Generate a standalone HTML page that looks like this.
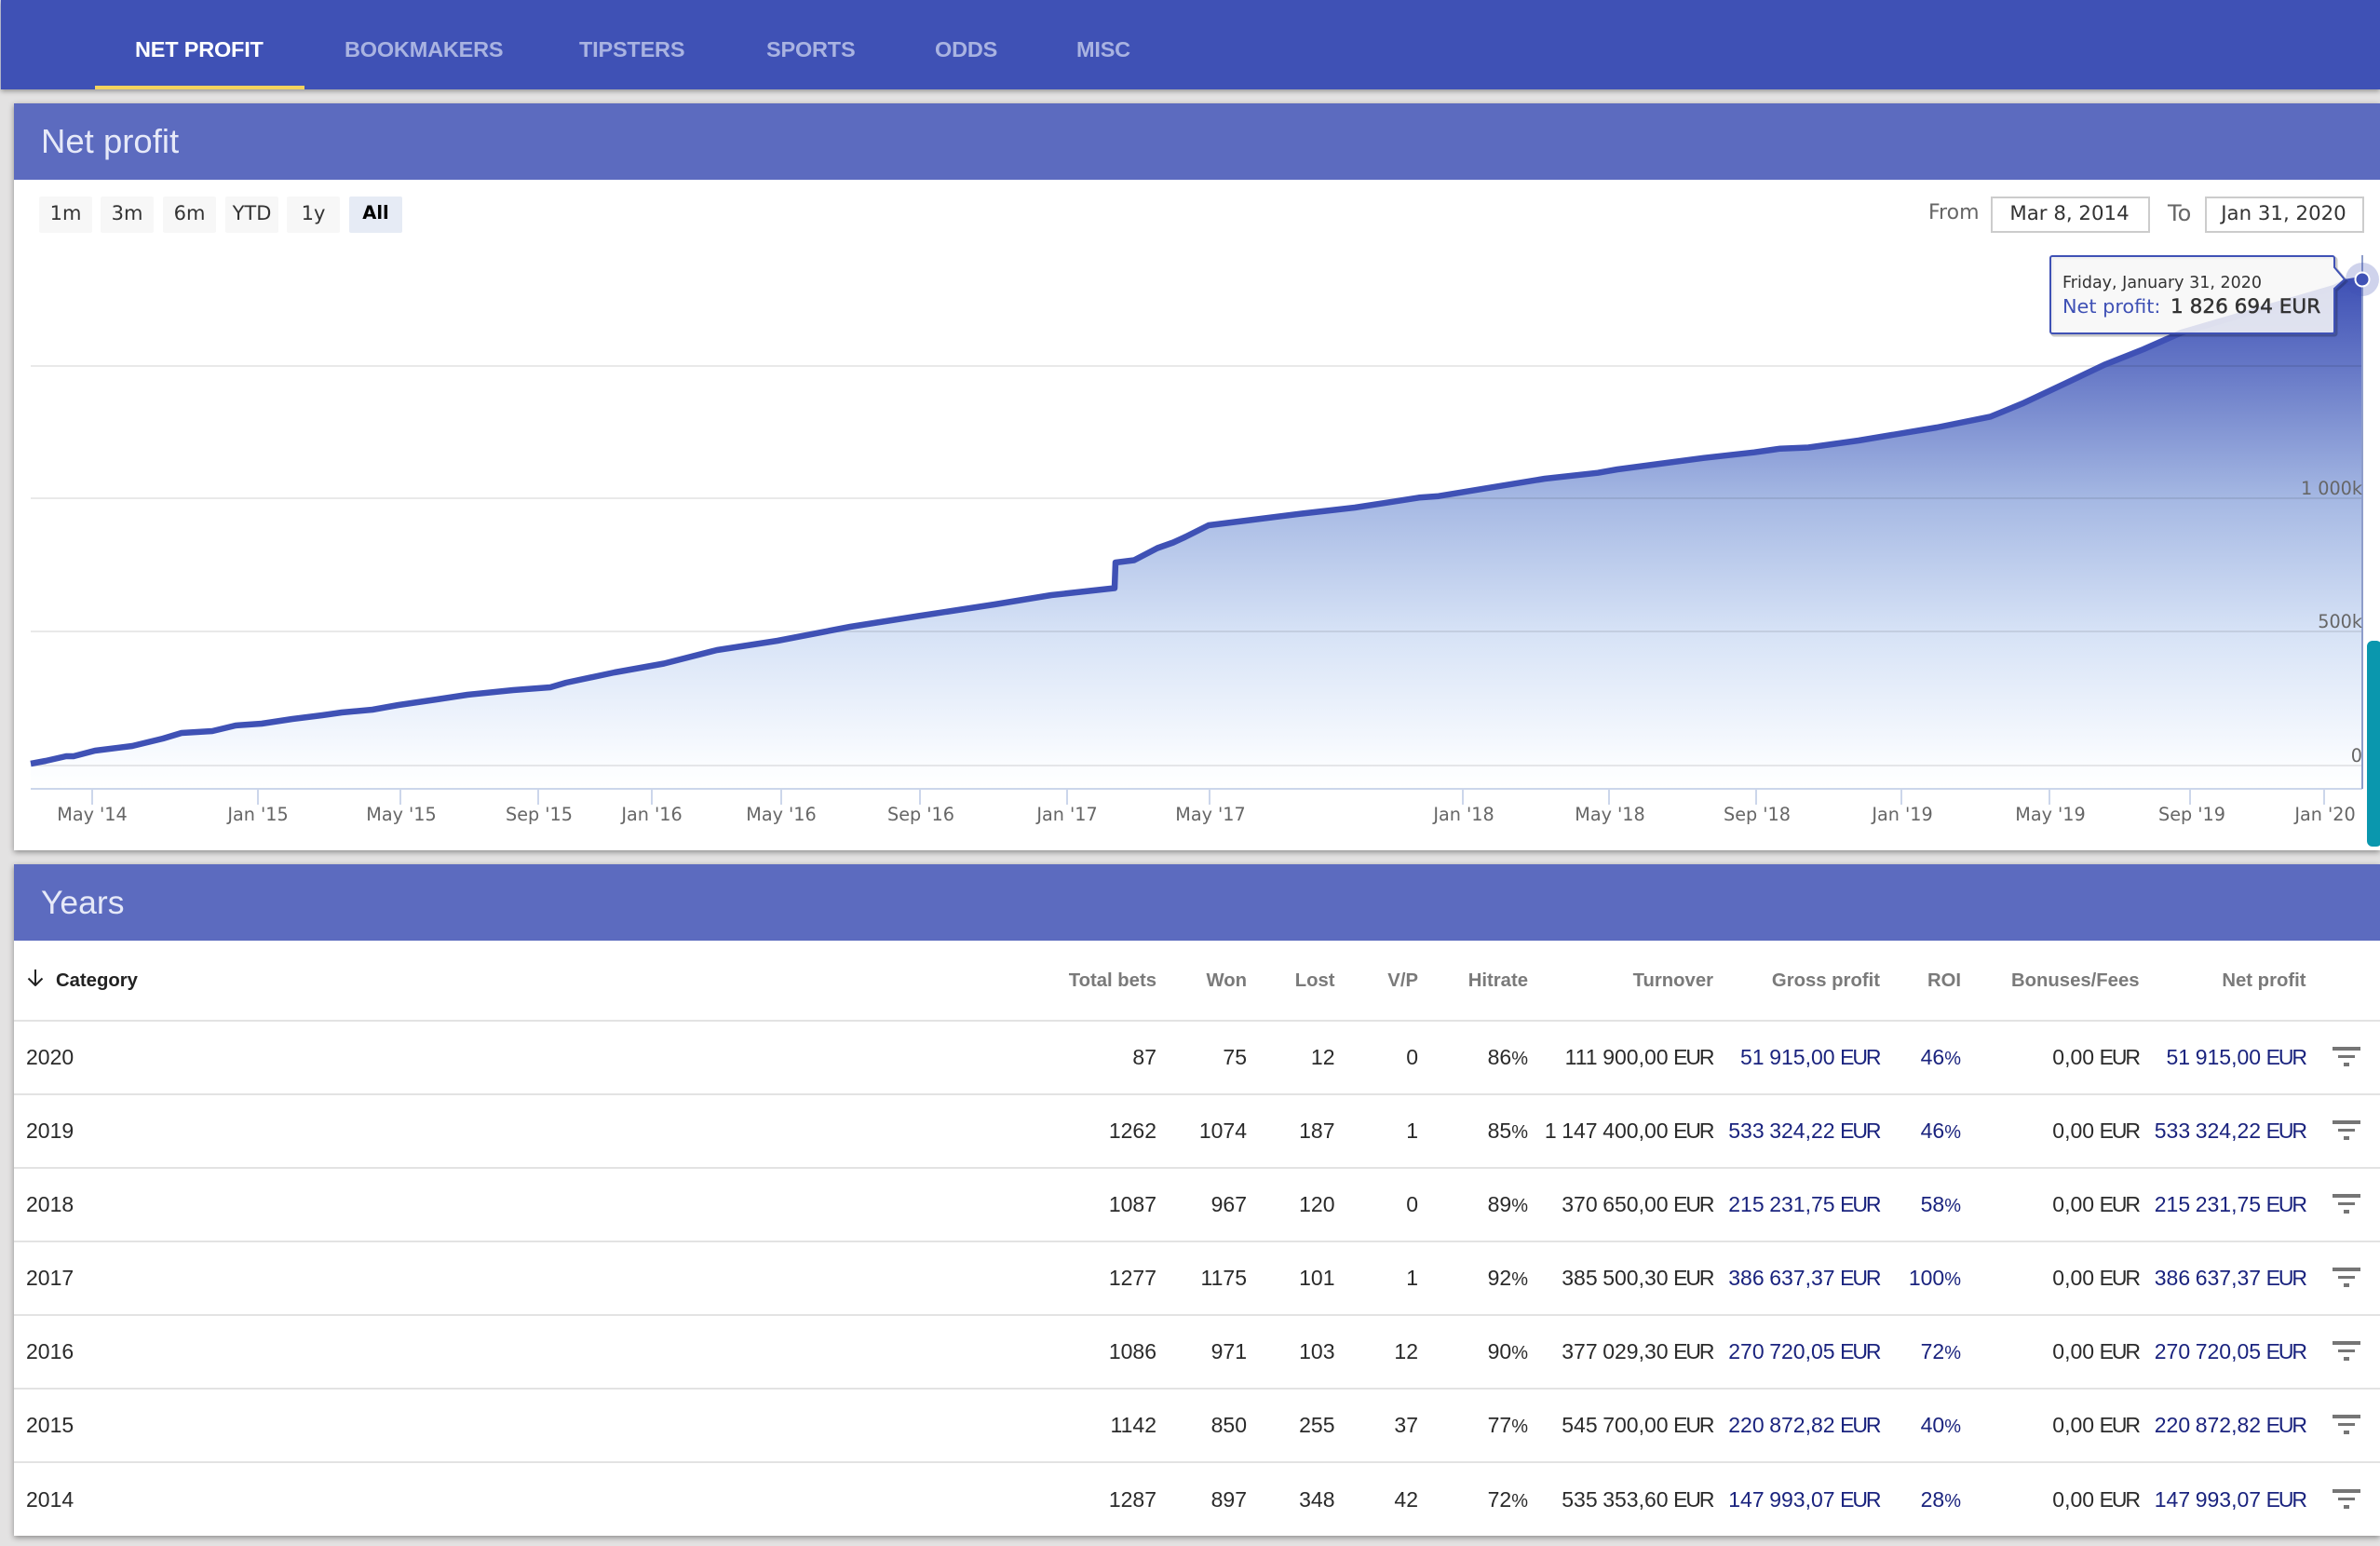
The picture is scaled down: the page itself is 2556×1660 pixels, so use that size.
<!DOCTYPE html>
<html lang="en">
<head>
<meta charset="utf-8">
<title>Net profit</title>
<style>
html,body{margin:0;padding:0;width:2556px;height:1660px;overflow:hidden;background:#e3e2e2;font-family:"Liberation Sans",sans-serif}
.a{position:absolute;white-space:nowrap}
#nav{left:1px;top:0;width:2555px;height:96px;background:#3f51b5;box-shadow:0 2px 5px rgba(0,0,0,.35)}
.t{top:38px;font-size:23.5px;letter-spacing:-.2px;line-height:30px;font-weight:bold;color:#a9b3e1}
.card{left:15px;width:2541px;background:#fff;box-shadow:0 2px 6px rgba(0,0,0,.4)}
.head{left:15px;width:2541px;height:82px;background:#5c6bbf;color:#e6e9f8;font-size:36.5px;line-height:82px}
.b{top:211px;width:57px;height:39px;background:#f7f7f7;border-radius:2px;font:21px/36px "DejaVu Sans",sans-serif;color:#333;text-align:center}
.l{top:211px;font:22px/36px "DejaVu Sans",sans-serif;color:#666}
.d{top:211px;height:35px;width:167px;border:2px solid #ccc;font:21.3px/33px "DejaVu Sans",sans-serif;color:#333;text-align:center;text-indent:-2px}
table{position:absolute;left:15px;top:1011px;border-collapse:separate;border-spacing:0;table-layout:fixed;width:2541px;font-size:23px;word-spacing:-.8px;color:#2a2a2a}
th,td{padding:0;text-align:right;white-space:nowrap;overflow:visible;box-sizing:border-box}
th{height:86px;font-size:20.3px;word-spacing:0;font-weight:bold;color:#7a7a7a;border-bottom:2px solid #e3e3e3}
td{height:79px;border-bottom:2px solid #e3e3e3}
tr:last-child td{border-bottom:0}
th.c,td.c{text-align:left;padding-left:13px}
th.c{color:#222;padding-left:45px}
.n{color:#1a237e}
i{font-style:normal;letter-spacing:-2.1px;margin-right:.6px}
u{text-decoration:none;font-size:20px}
.f{width:30px;height:21px;margin:-2px 0 0 28px;background:linear-gradient(#757575,#757575) center top/30px 4px no-repeat,linear-gradient(#757575,#757575) center/18px 3px no-repeat,linear-gradient(#757575,#757575) center bottom/6px 4px no-repeat}
svg text{font-family:"DejaVu Sans",sans-serif}
</style>
</head>
<body>
<div class="a" style="left:0;top:0;width:2px;height:96px;background:#cfd3ec"></div>
<div class="a" id="nav"></div>
<div class="a t" style="left:145px;color:#fff">NET PROFIT</div>
<div class="a" style="left:102px;top:92px;width:225px;height:4px;background:#f4d35e"></div>
<div class="a t" style="left:370px">BOOKMAKERS</div>
<div class="a t" style="left:622px">TIPSTERS</div>
<div class="a t" style="left:823px">SPORTS</div>
<div class="a t" style="left:1004px">ODDS</div>
<div class="a t" style="left:1156px">MISC</div>

<div class="a card" style="top:111px;height:802px"></div>
<div class="a head" style="top:111px"><span style="margin-left:29px">Net profit</span></div>

<div class="a b" style="left:42px">1m</div>
<div class="a b" style="left:108px">3m</div>
<div class="a b" style="left:175px">6m</div>
<div class="a b" style="left:242px">YTD</div>
<div class="a b" style="left:308px">1y</div>
<div class="a b" style="left:375px;background:#e6ebf5;color:#000;font-weight:bold;font-size:19.5px">All</div>

<div class="a l" style="left:2071px">From</div>
<div class="a d" style="left:2138px">Mar 8, 2014</div>
<div class="a l" style="left:2328px;font-size:24px">To</div>
<div class="a d" style="left:2368px">Jan 31, 2020</div>

<svg class="a" style="left:0;top:0" width="2556" height="920" viewBox="0 0 2556 920">
<defs>
<linearGradient id="g" gradientUnits="userSpaceOnUse" x1="0" y1="300" x2="0" y2="847">
<stop offset="0" stop-color="#3f51b5"/>
<stop offset=".17" stop-color="#6577c6"/>
<stop offset=".43" stop-color="#a5b8e3"/>
<stop offset=".69" stop-color="#d6e2f6"/>
<stop offset=".95" stop-color="#fafcff"/>
<stop offset="1" stop-color="#ffffff"/>
</linearGradient>
</defs>
<path fill="url(#g)" d="M33,820 49,817 71,812 79,812 102,806 142,801 175,793 195,787 228,785 253,779 281,777 314,772 346,768 367,765 400,762 428,757 469,751 502,746 551,741 591,738 608,733 660,722 713,712.5 770,698 835,688 913,673 986,661.5 1068,649 1129,639 1197,631.5 1198,604 1218,601.5 1243,588.5 1260,582.5 1273,576.5 1298,564 1330,560 1398,551.5 1455,545 1492,539.3 1524,534.3 1545,532.7 1602,523.3 1659,514 1716,507.7 1737,504 1830,491.7 1884,485.7 1912,481.7 1942,480.5 1996,473 2080,459 2138,447.3 2172,433.3 2218,411.7 2260,391.7 2302,375 2343,357 2507,309 2519,303 2537,300 2537,847 33,847Z"/>
<g stroke="#000" stroke-opacity=".085" stroke-width="2">
<path d="M33,393H2537M33,535H2537M33,678H2537M33,822H2537"/>
</g>
<path stroke="#ccd6eb" stroke-width="2" fill="none" d="M33,847H2537M99,847V864M277,847V864M430,847V864M578,847V864M700,847V864M839,847V864M988,847V864M1146,847V864M1299,847V864M1571,847V864M1728,847V864M1886,847V864M2042,847V864M2201,847V864M2352,847V864M2496,847V864"/>
<path fill="none" stroke="#3f51b5" stroke-width="6.5" stroke-linejoin="round" d="M33,820 49,817 71,812 79,812 102,806 142,801 175,793 195,787 228,785 253,779 281,777 314,772 346,768 367,765 400,762 428,757 469,751 502,746 551,741 591,738 608,733 660,722 713,712.5 770,698 835,688 913,673 986,661.5 1068,649 1129,639 1197,631.5 1198,604 1218,601.5 1243,588.5 1260,582.5 1273,576.5 1298,564 1330,560 1398,551.5 1455,545 1492,539.3 1524,534.3 1545,532.7 1602,523.3 1659,514 1716,507.7 1737,504 1830,491.7 1884,485.7 1912,481.7 1942,480.5 1996,473 2080,459 2138,447.3 2172,433.3 2218,411.7 2260,391.7 2302,375 2343,357 2507,309 2519,303 2537,300"/>
<path stroke="#8e9dca" stroke-width="2" d="M2537,274V847"/>
<g font-size="19.2" fill="#666" text-anchor="end">
<text x="2537" y="531">1 000k</text>
<text x="2537" y="674">500k</text>
<text x="2537" y="818">0</text>
</g>
<g font-size="19.2" fill="#666" text-anchor="middle">
<text x="99" y="881">May '14</text>
<text x="277" y="881">Jan '15</text>
<text x="431" y="881">May '15</text>
<text x="579" y="881">Sep '15</text>
<text x="700" y="881">Jan '16</text>
<text x="839" y="881">May '16</text>
<text x="989" y="881">Sep '16</text>
<text x="1146" y="881">Jan '17</text>
<text x="1300" y="881">May '17</text>
<text x="1572" y="881">Jan '18</text>
<text x="1729" y="881">May '18</text>
<text x="1887" y="881">Sep '18</text>
<text x="2043" y="881">Jan '19</text>
<text x="2202" y="881">May '19</text>
<text x="2354" y="881">Sep '19</text>
<text x="2497" y="881">Jan '20</text>
</g>
<path fill="none" stroke="#000" stroke-opacity=".22" stroke-width="3" transform="translate(2,2)" d="M2204,275H2505a2,2 0 0 1 2,2V287L2518,300 2507,310V356a2,2 0 0 1 -2,2H2204a2,2 0 0 1 -2,-2V277a2,2 0 0 1 2,-2Z"/>
<path fill="#f7f7f7" fill-opacity=".86" stroke="#3f51b5" stroke-width="2" d="M2204,275H2505a2,2 0 0 1 2,2V287L2518,300 2507,310V356a2,2 0 0 1 -2,2H2204a2,2 0 0 1 -2,-2V277a2,2 0 0 1 2,-2Z"/>
<text x="2215" y="309" font-size="17.5" fill="#333">Friday, January 31, 2020</text>
<text x="2215" y="336" font-size="20.8" fill="#3f51b5">Net profit:</text>
<text x="2331" y="336" font-size="21.6" fill="#333" stroke="#333" stroke-width=".45">1 826 694 EUR</text>
<circle cx="2537" cy="300" r="18" fill="#3f51b5" fill-opacity=".25"/>
<circle cx="2537" cy="300" r="7.5" fill="#3f51b5" stroke="#fff" stroke-width="2"/>
</svg>

<div class="a" style="left:2540px;top:686px;width:20px;height:225px;background:#0a97ae;border:2px solid #fff;border-radius:8px;box-sizing:border-box"></div>

<div class="a card" style="top:928px;height:721px"></div>
<div class="a head" style="top:928px;font-size:35.5px"><span style="margin-left:29px">Years</span></div>

<svg class="a" style="left:29px;top:1041px" width="18" height="18" viewBox="0 0 18 18"><path d="M9,0V17M1.5,9.5 9,17 16.5,9.5" fill="none" stroke="#222" stroke-width="2"/></svg>

<table>
<colgroup><col style="width:1085px"><col style="width:142px"><col style="width:97px"><col style="width:94.5px"><col style="width:89.5px"><col style="width:118px"><col style="width:199px"><col style="width:179px"><col style="width:87px"><col style="width:191.5px"><col style="width:179px"><col></colgroup>
<tr><th class="c">Category</th><th>Total bets</th><th>Won</th><th>Lost</th><th>V/P</th><th>Hitrate</th><th>Turnover</th><th>Gross profit</th><th>ROI</th><th>Bonuses/Fees</th><th>Net profit</th><th></th></tr>
<tr><td class="c">2020</td><td>87</td><td>75</td><td>12</td><td>0</td><td>86<u>%</u></td><td>111 900,00 <i>EUR</i></td><td class="n">51 915,00 <i>EUR</i></td><td class="n">46<u>%</u></td><td>0,00 <i>EUR</i></td><td class="n">51 915,00 <i>EUR</i></td><td><div class="f"></div></td></tr>
<tr><td class="c">2019</td><td>1262</td><td>1074</td><td>187</td><td>1</td><td>85<u>%</u></td><td>1 147 400,00 <i>EUR</i></td><td class="n">533 324,22 <i>EUR</i></td><td class="n">46<u>%</u></td><td>0,00 <i>EUR</i></td><td class="n">533 324,22 <i>EUR</i></td><td><div class="f"></div></td></tr>
<tr><td class="c">2018</td><td>1087</td><td>967</td><td>120</td><td>0</td><td>89<u>%</u></td><td>370 650,00 <i>EUR</i></td><td class="n">215 231,75 <i>EUR</i></td><td class="n">58<u>%</u></td><td>0,00 <i>EUR</i></td><td class="n">215 231,75 <i>EUR</i></td><td><div class="f"></div></td></tr>
<tr><td class="c">2017</td><td>1277</td><td>1175</td><td>101</td><td>1</td><td>92<u>%</u></td><td>385 500,30 <i>EUR</i></td><td class="n">386 637,37 <i>EUR</i></td><td class="n">100<u>%</u></td><td>0,00 <i>EUR</i></td><td class="n">386 637,37 <i>EUR</i></td><td><div class="f"></div></td></tr>
<tr><td class="c">2016</td><td>1086</td><td>971</td><td>103</td><td>12</td><td>90<u>%</u></td><td>377 029,30 <i>EUR</i></td><td class="n">270 720,05 <i>EUR</i></td><td class="n">72<u>%</u></td><td>0,00 <i>EUR</i></td><td class="n">270 720,05 <i>EUR</i></td><td><div class="f"></div></td></tr>
<tr><td class="c">2015</td><td>1142</td><td>850</td><td>255</td><td>37</td><td>77<u>%</u></td><td>545 700,00 <i>EUR</i></td><td class="n">220 872,82 <i>EUR</i></td><td class="n">40<u>%</u></td><td>0,00 <i>EUR</i></td><td class="n">220 872,82 <i>EUR</i></td><td><div class="f"></div></td></tr>
<tr><td class="c">2014</td><td>1287</td><td>897</td><td>348</td><td>42</td><td>72<u>%</u></td><td>535 353,60 <i>EUR</i></td><td class="n">147 993,07 <i>EUR</i></td><td class="n">28<u>%</u></td><td>0,00 <i>EUR</i></td><td class="n">147 993,07 <i>EUR</i></td><td><div class="f"></div></td></tr>
</table>
</body>
</html>
